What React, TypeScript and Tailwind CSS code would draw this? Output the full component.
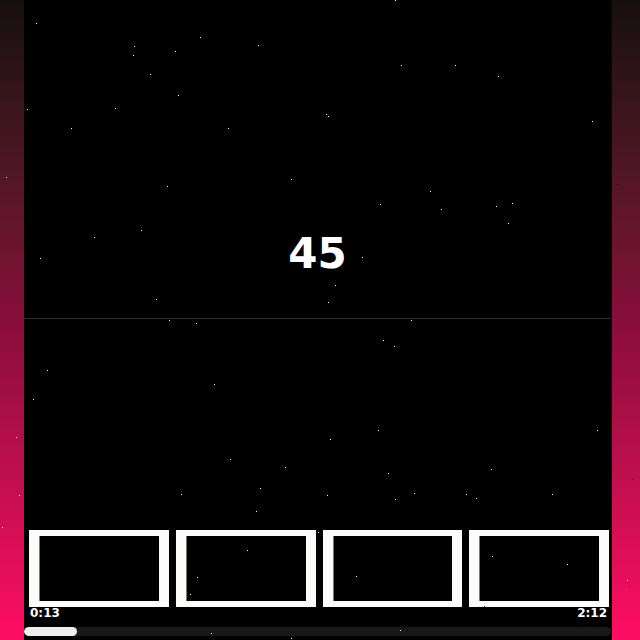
const STARS: [number, number][] = [
  [36, 23], [134, 46], [133, 55], [175, 51], [200, 37], [150, 74], [178, 95], [27, 109],
  [115, 108], [71, 128], [6, 177], [167, 186], [395, 0], [258, 45], [401, 65], [326, 114],
  [328, 116], [228, 128], [291, 179], [380, 204], [455, 65], [498, 76], [592, 121], [430, 191],
  [441, 209], [496, 206], [512, 203], [141, 230], [94, 237], [40, 258], [156, 299], [169, 320],
  [196, 323], [47, 370], [33, 399], [362, 257], [332, 262], [335, 285], [328, 302], [411, 320],
  [383, 340], [394, 346], [214, 384], [508, 223], [16, 437], [19, 495], [2, 527], [181, 494],
  [197, 577], [190, 594], [211, 633], [330, 439], [378, 430], [230, 459], [285, 467], [260, 488],
  [256, 511], [327, 495], [388, 473], [395, 499], [414, 493], [318, 532], [247, 550], [356, 576],
  [400, 630], [291, 638], [597, 430], [491, 469], [466, 494], [476, 498], [552, 494], [492, 556],
  [567, 564], [627, 580],
];

const SPECKS: [number, number][] = [
  [618, 111], [617, 184], [632, 479], [629, 586], [484, 606],
];

const LANES = [1, 2, 3, 4];

function Starfield() {
  return (
    <svg
      className="pointer-events-none absolute inset-0 h-full w-full"
      viewBox="0 0 640 640"
      preserveAspectRatio="none"
      shapeRendering="crispEdges"
      aria-hidden="true"
    >
      {STARS.map(([x, y]) => (
        <rect key={`${x}-${y}`} x={x} y={y} width="1" height="1" fill="#ffffff" />
      ))}
      {SPECKS.map(([x, y]) => (
        <rect key={`${x}-${y}`} x={x} y={y} width="1" height="1" fill="#300818" />
      ))}
    </svg>
  );
}

export default function App() {
  return (
    <div className="relative h-screen overflow-hidden bg-linear-to-b from-[#160f0f] via-[#880d3a] to-[#ff0d62] pr-7 pl-6 font-['DejaVu_Sans',sans-serif] font-bold text-white">
      <main className="flex h-full flex-col border-r border-[#180208] bg-black">
        <section className="flex h-[calc(50%-1px)] shrink-0 items-end justify-center border-b border-[#303030] pb-10">
          <p className="text-[42px] leading-12">45</p>
        </section>

        <section className="mt-auto">
          <div className="grid grid-cols-4 gap-[7px] pr-[2px] pl-[5px]">
            {LANES.map((lane) => (
              <button
                key={lane}
                type="button"
                aria-label={`Lane ${lane}`}
                className="h-[77px] border-x-[10px] border-y-[6px] border-[#fcfcfa] bg-black shadow-[inset_1px_0_0_#777]"
              />
            ))}
          </div>
          <div className="flex h-5 justify-between pr-1 pl-1.5 text-[12px] leading-3">
            <time>0:13</time>
            <time>2:12</time>
          </div>
          <progress
            aria-label="Song progress"
            max={100}
            value={9}
            className="mb-1 block h-[9px] w-full appearance-none overflow-hidden rounded-full bg-[#181818] [&::-webkit-progress-bar]:bg-[#181818] [&::-webkit-progress-value]:rounded-full [&::-webkit-progress-value]:bg-[#eeeeee]"
          />
        </section>
      </main>
      <Starfield />
    </div>
  );
}
